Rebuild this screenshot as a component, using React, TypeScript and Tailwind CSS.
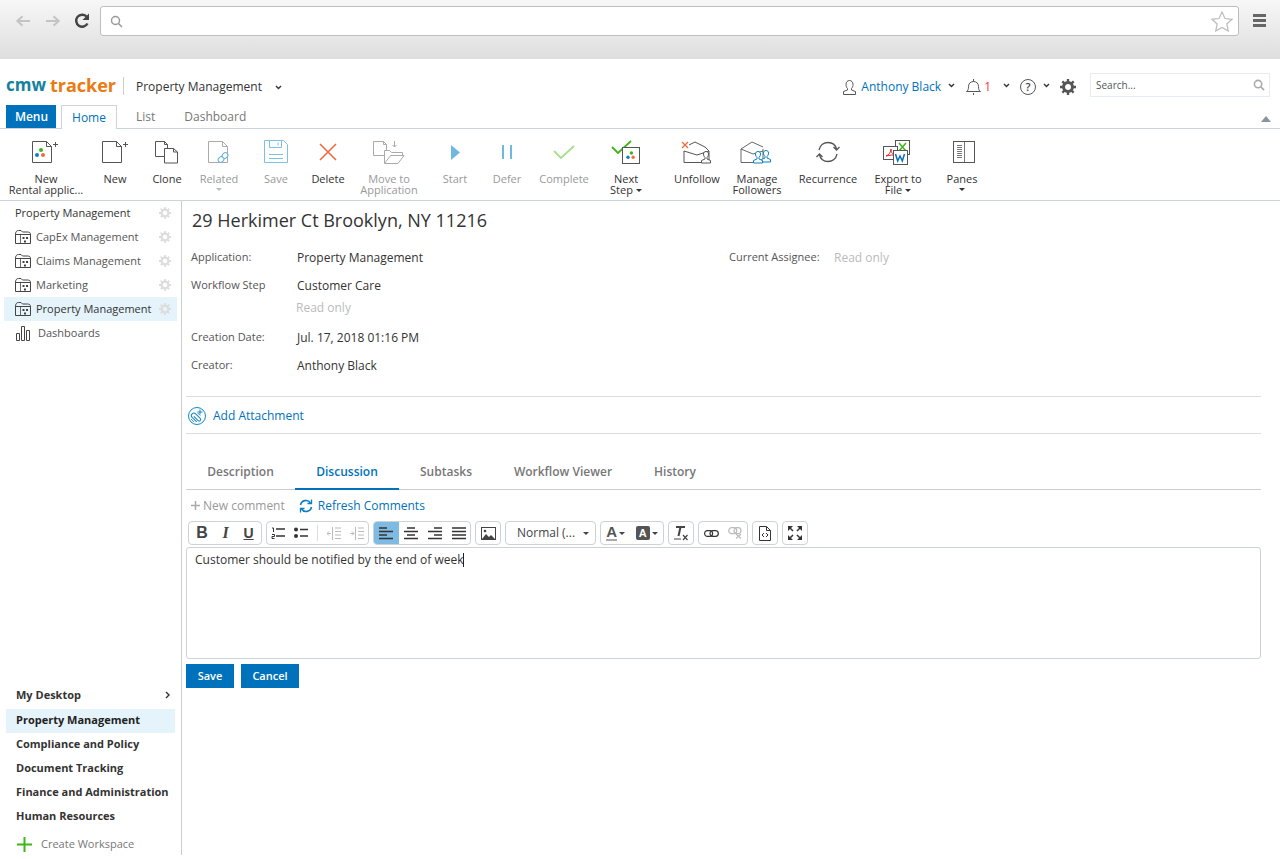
import React from "react";

const font = { fontFamily: '"Open Sans", sans-serif' };

const Caret = ({ c = "#444", cls = "" }: { c?: string; cls?: string }) => (
  <svg width="6" height="3" viewBox="0 0 6 3" className={`inline-block ${cls}`}><path d="M0 0h6L3 3z" fill={c} /></svg>
);
const Chev = ({ cls = "" }: { cls?: string }) => (
  <svg width="7" height="5" viewBox="0 0 7 5" className={cls}><path d="M1 1l2.500 2.500L6 1" fill="none" stroke="#333" strokeWidth="1.400" /></svg>
);
const Dots = ({ x = 0, y = 0, s = 1 }: { x?: number; y?: number; s?: number }) => (
  <g transform={`translate(${x} ${y}) scale(${s})`}>
    <circle cx="4" cy="0" r="2" fill="#3fb618" />
    <circle cx="0" cy="5" r="2" fill="#0b7fc4" />
    <circle cx="6" cy="5" r="2" fill="#f26a3a" />
  </g>
);
const Doc = ({ c = "#555" }: { c?: string }) => (
  <path d="M.5.500h14l5 5v16H.5zM14.500.5v5h5" fill="#fff" stroke={c} />
);
const Plus = ({ x, y }: { x: number; y: number }) => (
  <path d={`M${x} ${y + 2.5}h5M${x + 2.5} ${y}v5`} stroke="#555" strokeWidth="1" />
);

const IconNewApp = () => (
  <svg width="28" height="24" viewBox="0 0 28 24" className="-ml-[3px]"><g transform="translate(1 1)"><Doc /><Dots x={5} y={9} /></g><Plus x={22} y={2} /></svg>
);
const IconNew = () => (
  <svg width="28" height="24" viewBox="0 0 28 24"><g transform="translate(1 1)"><Doc /></g><Plus x={22} y={2} /></svg>
);
const IconClone = () => (
  <svg width="24" height="24" viewBox="0 0 24 24" className="-ml-[1px]">
    <path d="M.5 1.500h9l3 3v12H.5zM9.500 1.500v3h3" fill="#fff" stroke="#555" />
    <path d="M9.500 8.500h9l4 3.500v11h-13zM18.500 8.500v3.500h4" fill="#fff" stroke="#555" />
  </svg>
);
const IconRelated = () => (
  <svg width="24" height="24" viewBox="0 0 24 24">
    <g transform="translate(1 1)"><Doc c="#aaa" /></g>
    <g fill="#fff" stroke="#5fb0dd" strokeWidth="1">
      <rect x="11" y="17" width="6" height="5" rx="2.500" transform="rotate(-45 14 19.500)" />
      <rect x="15" y="13" width="6" height="5" rx="2.500" transform="rotate(-45 18 15.500)" />
    </g>
  </svg>
);
const IconSave = () => (
  <svg width="24" height="24" viewBox="0 0 24 24" fill="none" stroke="#7cc0e2">
    <path d="M.5.500h19l4 4v18H.5zM5.500.5v7h12v-7M14 2.500v3M5 14.500h14M5 18.500h14" />
  </svg>
);
const IconDelete = () => (
  <svg width="20" height="20" viewBox="0 0 20 20"><path d="M2 2l16 16M18 2L2 18" stroke="#f26a3a" strokeWidth="1.600" /></svg>
);
const IconMove = () => (
  <svg width="32" height="24" viewBox="0 0 32 24" fill="#fff" stroke="#aaa">
    <path d="M.5 1.500h10l3 3v11H.5zM10.500 1.500v3h3" />
    <path d="M11.500 23.500v-13h5l2 2h11v3M11.500 23.500l6-8h13.500l-6 8zM21.500 1v6M19.500 5l2 2 2-2" />
  </svg>
);
const IconStart = () => (
  <svg width="9" height="15" viewBox="0 0 9 15"><path d="M0 0l9 7.500L0 15z" fill="#70b8e0" /></svg>
);
const IconDefer = () => (
  <svg width="10" height="14" viewBox="0 0 10 14"><path d="M1 0v14M9 0v14" stroke="#70b8e0" strokeWidth="2" /></svg>
);
const IconCheck = () => (
  <svg width="22" height="15" viewBox="0 0 22 15"><path d="M1 6l7 7L21 1" fill="none" stroke="#a8e08c" strokeWidth="1.800" /></svg>
);
const IconNext = () => (
  <svg width="30" height="24" viewBox="0 0 30 24">
    <path d="M1 7l6 6L20 1" fill="none" stroke="#3fb618" strokeWidth="1.800" />
    <rect x="11.500" y="7.500" width="17" height="16" fill="#fff" stroke="#555" />
    <Dots x={17} y={13} s={0.85} />
  </svg>
);
const Person = ({ x, y, c }: { x: number; y: number; c: string }) => (
  <path transform={`translate(${x} ${y})`} d="M4 6.500c-1-1-1.500-2-1.500-3.500C2.500 1.500 3.500.5 5 .5s2.500 1 2.500 2.500c0 1.500-.5 2.500-1.500 3.500v1.500l3.500 1.500v2.500H.5V9.500L4 8z" fill="#fff" stroke={c} />
);
const IconUnfollow = () => (
  <svg width="32" height="24" viewBox="0 0 32 24">
    <path d="M3 11v11.500h25V11L24 7 14 2l-6 3" fill="none" stroke="#555" />
    <path d="M3 11l13 4 12-4" fill="none" stroke="#555" />
    <path d="M1 2l6 6M7 2L1 8" stroke="#f26a3a" strokeWidth="1.300" />
    <Person x={20} y={11} c="#555" />
  </svg>
);
const IconManage = () => (
  <svg width="34" height="24" viewBox="0 0 34 24">
    <path d="M1 9v13.500h22V9M1 9l11-7 11 5M1 9l12 5 10-3" fill="none" stroke="#555" strokeWidth="0.900" />
    <Person x={21} y={10} c="#0b7fc4" />
    <Person x={13} y={11} c="#0b7fc4" />
  </svg>
);
const IconRecurrence = () => (
  <svg width="24" height="22" viewBox="0 0 24 22" fill="none" stroke="#555" strokeWidth="1.300">
    <path d="M3 9C4 4 8 1.500 12 1.500c4 0 7.500 2.500 8.500 6.500" />
    <path d="M21 13c-1 5-5 7.500-9 7.500S4.500 18 3.500 14" />
    <path d="M17.500 6l3 3 3-3M.500 16l3-3 3 3" />
  </svg>
);
const IconExport = () => (
  <svg width="28" height="25" viewBox="0 0 28 25" className="-ml-[3px]">
    <rect x="12.500" y=".5" width="14" height="14" fill="#fff" stroke="#555" />
    <path d="M16 3l7 8M23 3l-7 8" stroke="#3fb618" strokeWidth="1.500" />
    <rect x=".5" y="6.500" width="14" height="13" fill="#fff" stroke="#555" />
    <path d="M3 16c3-1 5-4 5-7 0 4 2 6 5 6-3 0-6 0-10 1z" fill="none" stroke="#e02020" />
    <rect x="10.500" y="10.500" width="14" height="14" fill="#fff" stroke="#555" />
    <path d="M12.500 14l2.200 7 2.300-5 2.300 5 2.200-7" fill="none" stroke="#0b6fb8" strokeWidth="1.500" />
  </svg>
);
const IconPanes = () => (
  <svg width="22" height="22" viewBox="0 0 22 22" fill="none" stroke="#555" className="ml-[3px]">
    <rect x=".5" y=".5" width="21" height="21" />
    <path d="M11.500 0v22M4 4.500h5M4 6.500h5M4 8.500h5M4 10.500h5M4 12.500h5M4 14.500h5M4 16.500h5" strokeWidth="0.800" />
  </svg>
);

type TB = { w: number; ml?: number; icon: React.ReactNode; l1: string; l2?: string; caret?: "inline" | "below"; dim?: boolean };
const tools: TB[] = [
  { w: 80, icon: <IconNewApp />, l1: "New", l2: "Rental applic..." },
  { w: 58, icon: <IconNew />, l1: "New" },
  { w: 46, icon: <IconClone />, l1: "Clone" },
  { w: 58, icon: <IconRelated />, l1: "Related", caret: "below", dim: true },
  { w: 56, icon: <IconSave />, l1: "Save", dim: true },
  { w: 48, icon: <IconDelete />, l1: "Delete" },
  { w: 74, icon: <IconMove />, l1: "Move to", l2: "Application", dim: true },
  { w: 58, icon: <IconStart />, l1: "Start", dim: true },
  { w: 46, icon: <IconDefer />, l1: "Defer", dim: true },
  { w: 68, icon: <IconCheck />, l1: "Complete", dim: true },
  { w: 56, icon: <IconNext />, l1: "Next", l2: "Step", caret: "inline" },
  { w: 54, ml: 16, icon: <IconUnfollow />, l1: "Unfollow" },
  { w: 66, icon: <IconManage />, l1: "Manage", l2: "Followers" },
  { w: 76, icon: <IconRecurrence />, l1: "Recurrence" },
  { w: 64, icon: <IconExport />, l1: "Export to", l2: "File", caret: "inline" },
  { w: 64, icon: <IconPanes />, l1: "Panes", caret: "below" },
];

const Workspace = () => (
  <svg width="16" height="14" viewBox="0 0 16 14" fill="none" stroke="#444" className="shrink-0">
    <path d="M.5 4.500V13.500h15v-9M.5 4.500C.5 2 1.500.5 3.500.5h2.500l1.500 1.500H12.500c2 0 3 1 3 2.500zM.5 4.500h15" />
    <path d="M5.500 4.500v9" strokeWidth="0.800" />
    <path d="M7.500 7h2v2h-2zM11 7h2v2h-2zM9 10.500h2v2H9z" fill="#444" stroke="none" />
  </svg>
);
const Cog = ({ s = 12, c = "#ddd" }: { s?: number; c?: string }) => (
  <svg width={s} height={s} viewBox="0 0 16 16" className="shrink-0">
    <circle cx="8" cy="8" r="4.500" fill="none" stroke={c} strokeWidth="3" />
    <path d="M8 0v16M0 8h16M2.300 2.300l11.400 11.400M13.700 2.300L2.300 13.700" stroke={c} strokeWidth="2.400" strokeDasharray="3 10 3" />
  </svg>
);

const Group = ({ w, children, cls = "" }: { w: number; children: React.ReactNode; cls?: string }) => (
  <div style={{ width: w }} className={`h-[24px] border border-[#ccd2d6] rounded-[4px] flex items-center justify-around overflow-hidden ${cls}`}>{children}</div>
);
const Lines = ({ kind }: { kind: "l" | "c" | "r" | "j" }) => {
  const d = {
    l: "M0 1h8M0 4.500h14M0 8h8M0 11.500h14",
    c: "M3 1h8M0 4.500h14M3 8h8M0 11.500h14",
    r: "M6 1h8M0 4.500h14M6 8h8M0 11.500h14",
    j: "M0 1h14M0 4.500h14M0 8h14M0 11.500h14",
  }[kind];
  return <svg width="14" height="13" viewBox="0 0 14 13" className="-ml-[1px]"><path d={d} stroke="#333" strokeWidth="1.600" /></svg>;
};

const Field = ({ label, value, h, cls = "" }: { label: string; value: string; h: number; cls?: string }) => (
  <div className={`flex items-center ${cls}`} style={{ height: h }}>
    <div className="w-[106px] text-[#555] pb-[2px]">{label}</div>
    <div className="text-[12px] text-[#333]">{value}</div>
  </div>
);

export default function App() {
  return (
    <div style={font} className="w-[1280px] h-[859px] bg-white overflow-hidden text-[11px] text-[#333]">
      {/* browser chrome */}
      <div className="h-[59px] bg-gradient-to-b from-[#f7f7f7] to-[#dedede] flex items-start pt-[6px]">
        <div className="w-[100px] h-[30px] flex items-center pl-[15px] gap-[12px]">
          <svg width="16" height="14" viewBox="0 0 17 14" fill="none" stroke="#c4c4c4" strokeWidth="2.200"><path d="M16 7H3M8 2L2.500 7 8 12" /></svg>
          <svg width="16" height="14" viewBox="0 0 17 14" fill="none" stroke="#c4c4c4" strokeWidth="2.200" className="ml-[2px]"><path d="M1 7h13M9 2l5.500 5L9 12" /></svg>
          <svg width="16" height="16" viewBox="0 0 16 16" fill="none" className="ml-[1px]"><path d="M13.500 10.500A6 6 0 1 1 12.500 3.500" stroke="#444" strokeWidth="2.400" /><path d="M15 .5v6.500H8.500z" fill="#444" /></svg>
        </div>
        <div className="w-[1139px] h-[30px] bg-white border border-[#bdbdbd] rounded-[3px] flex items-center justify-between pl-[9px] pr-[5px]">
          <svg width="13" height="13" viewBox="0 0 13 13" fill="none" stroke="#999" strokeWidth="1.500"><circle cx="5.500" cy="5.500" r="4" /><path d="M8.500 8.500l3.500 3.500" /></svg>
          <svg width="22" height="21" viewBox="0 0 22 21" fill="#fff" stroke="#bbb" strokeWidth="1.200"><path d="M11 1l3 6.500 7 .8-5.200 4.700 1.500 7L11 16.500 4.700 20l1.500-7L1 8.300l7-.8z" /></svg>
        </div>
        <div className="flex-1 flex flex-col gap-[2px] items-center pt-[8px]">
          <div className="w-[13px] h-[3px] bg-[#666]" /><div className="w-[13px] h-[3px] bg-[#666]" /><div className="w-[13px] h-[3px] bg-[#666]" />
        </div>
      </div>

      {/* header */}
      <div className="h-[46px] flex items-center pl-[6px] pr-[10px] pt-[5px]">
        <div className="flex items-center justify-between font-bold leading-none w-[110px] whitespace-nowrap">
          <span className="text-[#14829e] text-[17px]">cmw</span><span className="text-[#ea7a12] text-[18px]">tracker</span>
        </div>
        <div className="w-px h-[18px] bg-[#ccc] ml-[7px] mr-[12px] mt-[2px]" />
        <span className="text-[12px] text-[#333] pt-[5px]">Property Management</span>
        <Chev cls="ml-[13px] mt-[5px]" />
        <div className="flex-1" />
        <div className="flex items-center pt-[5px]">
          <svg width="13" height="15" viewBox="0 0 13 15" fill="none" stroke="#555"><path d="M4.500 8.500C3.500 7.500 3 6 3 4.500 3 2 4.500.5 6.500.5S10 2 10 4.500C10 6 9.500 7.500 8.500 8.500v1.500l4 1.500v3H.5v-3l4-1.500z" /></svg>
          <span className="text-[12px] text-[#0072bc] ml-[5px]">Anthony Black</span>
          <Chev cls="ml-[7px] -mt-[3px]" />
          <svg width="15" height="16" viewBox="0 0 15 16" fill="none" stroke="#555" className="ml-[11px]"><path d="M.5 12.500c1.500-1 2-2 2-5s2-5 5-5 5 2 5 5 .5 4 2 5zM7.500 0v2.500M7.500 14v2" /></svg>
          <span className="text-[12px] text-[#f33] ml-[3px]">1</span>
          <Chev cls="ml-[12px] -mt-[3px]" />
          <div className="ml-[10px] w-[16px] h-[16px] rounded-full border border-[#555] text-[11px] leading-[14px] text-center text-[#444] font-semibold">?</div>
          <Chev cls="ml-[7px] -mt-[3px]" />
          <span className="ml-[10px]"><Cog s={16} c="#555" /></span>
        </div>
        <div className="ml-[14px] w-[180px] h-[24px] border border-[#e6ecf6] flex items-center justify-between pl-[5px] pr-[4px] text-[10px] text-[#555] mt-[1px]">
          <span>Search...</span>
          <svg width="12" height="12" viewBox="0 0 13 13" fill="none" stroke="#aaa" strokeWidth="1.700"><circle cx="5.500" cy="5.500" r="4" /><path d="M8.500 8.500l3.500 3.500" /></svg>
        </div>
      </div>

      {/* tabs row */}
      <div className="h-[24px] border-b border-[#ccd4d8] flex items-end pl-[6px] pr-[9px]">
        <div className="w-[50px] h-[23px] bg-[#0072bc] text-white text-[12px] font-semibold flex items-center justify-center pl-[1px]">Menu</div>
        <div className="ml-[5px] w-[56px] h-[24px] border border-b-0 border-[#ccd4d8] bg-white text-[12px] text-[#0072bc] flex items-center justify-center -mb-px">Home</div>
        <span className="ml-[19px] text-[12px] text-[#777] leading-[23px]">List</span>
        <span className="ml-[29px] text-[12px] text-[#777] leading-[23px]">Dashboard</span>
        <div className="flex-1" />
        <svg width="10" height="6" viewBox="0 0 10 6" className="mb-[6px]"><path d="M0 6l5-6 5 6z" fill="#8a949a" /></svg>
      </div>

      {/* toolbar */}
      <div className="h-[72px] border-b border-[#ccd4d8] flex pl-[6px]">
        {tools.map((t) => (
          <div key={t.l1 + (t.l2 ?? "")} style={{ width: t.w, marginLeft: t.ml ?? 0 }} className={`shrink-0 flex flex-col items-center ${t.dim ? "text-[#999]" : "text-[#333]"}`}>
            <div className="h-[38px] w-full flex items-center justify-center pt-[8px]">{t.icon}</div>
            <div className="mt-[6px] text-[11px] leading-[11px] text-center whitespace-nowrap">{t.l1}</div>
            {t.l2 && (
              <div className="text-[11px] leading-[11px] text-center whitespace-nowrap">
                {t.l2}{t.caret === "inline" && <Caret cls="ml-[3px] mb-[1px]" c="#333" />}
              </div>
            )}
            {t.caret === "below" && <Caret cls="mt-[4px]" c={t.dim ? "#bbb" : "#333"} />}
          </div>
        ))}
      </div>

      {/* body */}
      <div className="h-[654px] flex">
        <aside className="w-[182px] shrink-0 border-r border-[#ccc] flex flex-col justify-between">
          <div className="pl-[4px] pr-[4px]">
            <div className="h-[24px] flex items-center pl-[11px] pr-[6px] justify-between"><span>Property Management</span><Cog /></div>
            {["CapEx Management", "Claims Management", "Marketing", "Property Management"].map((n, i) => (
              <div key={n} className={`h-[24px] flex items-center pl-[11px] pr-[6px] ${i === 3 ? "bg-[#e5f3fb] text-[#333]" : "text-[#555]"}`}>
                <Workspace /><span className="ml-[5px] flex-1 whitespace-nowrap">{n}</span><Cog />
              </div>
            ))}
            <div className="h-[24px] flex items-center pl-[12px] text-[#555]">
              <svg width="15" height="15" viewBox="0 0 15 15" fill="none" stroke="#444"><path d="M.5 14.500v-7h3v7zM5.500 14.500V.5h3v14zM10.500 14.500v-10h3v10z" /></svg>
              <span className="ml-[7px]">Dashboards</span>
            </div>
          </div>
          <div className="pl-[6px] pr-[6px] font-bold text-[#333]">
            <div className="h-[25px] flex items-center justify-between pl-[10px] pr-[5px] pb-[3px]">
              <span>My Desktop</span>
              <svg width="5" height="8" viewBox="0 0 5 8"><path d="M1 1l3 3-3 3" fill="none" stroke="#333" strokeWidth="1.400" /></svg>
            </div>
            {["Property Management", "Compliance and Policy", "Document Tracking", "Finance and Administration", "Human Resources"].map((n, i) => (
              <div key={n} className={`h-[24px] flex items-center pl-[10px] pb-[1px] whitespace-nowrap ${i === 0 ? "bg-[#e5f3fb] text-[#222]" : ""}`}>{n}</div>
            ))}
            <div className="h-[26px] flex items-center pl-[11px] pt-[4px] font-normal text-[#777]">
              <svg width="15" height="15" viewBox="0 0 15 15"><path d="M0 7.500h15M7.500 0v15" stroke="#3fb618" strokeWidth="2" /></svg>
              <span className="ml-[9px]">Create Workspace</span>
            </div>
          </div>
        </aside>

        <main className="w-[1075px] ml-[4px]">
          <div className="h-[40px] pt-[6px] pl-[6px] text-[18px] leading-[26px] text-[#333]">29 Herkimer Ct Brooklyn, NY 11216</div>
          <div className="pl-[5px] flex mt-[3px]">
            <div className="w-[538px]">
              <Field label="Application:" value="Property Management" h={28} />
              <Field label="Workflow Step" value="Customer Care" h={28} />
              <div className="h-[17px] pl-[105px] text-[12px] text-[#bbb] leading-[16px]">Read only</div>
              <Field label="Creation Date:" value="Jul. 17, 2018 01:16 PM" h={28} cls="mt-[7px]" />
              <Field label="Creator:" value="Anthony Black" h={28} />
            </div>
            <div className="h-[28px] flex items-center">
              <span className="w-[105px] text-[#555] pb-[2px]">Current Assignee:</span>
              <span className="text-[12px] text-[#bbb]">Read only</span>
            </div>
          </div>

          <div className="mt-[16px] h-[38px] border-y border-[#ddd] flex items-center pl-[2px] pt-[1px] text-[12px] text-[#0072bc]">
            <svg width="18" height="18" viewBox="0 0 18 18" fill="none" stroke="#1487c4">
              <circle cx="9" cy="9" r="8.500" />
              <g transform="rotate(-45 8 10)">
                <path d="M5 14V7.500a2.500 2.500 0 0 1 5 0V14a1.500 1.500 0 0 1-3 0V8" />
                <path d="M3 12V8M12 12V8" strokeWidth="0.800" />
              </g>
              <path d="M12 2.500v5M9.500 5h5" />
            </svg>
            <span className="ml-[7px]">Add Attachment</span>
          </div>

          <div className="mt-[21px] h-[35px] border-b border-[#ccc] flex text-[12px] font-semibold text-[#777]">
            {[["Description", 109], ["Discussion", 104], ["Subtasks", 94], ["Workflow Viewer", 140], ["History", 84]].map(([n, w]) => (
              <div key={n as string} style={{ width: w as number }} className={`h-[35px] flex items-center justify-center border-b-2 ${n === "Discussion" ? "text-[#0072bc] border-[#0072bc]" : "border-transparent"}`}>{n}</div>
            ))}
          </div>

          <div className="h-[31px] flex items-center pl-[5px] text-[12px]">
            <svg width="9" height="9" viewBox="0 0 9 9"><path d="M0 4.500h9M4.500 0v9" stroke="#aaa" strokeWidth="1.500" /></svg>
            <span className="ml-[3px] text-[#999]">New comment</span>
            <svg width="14" height="14" viewBox="0 0 14 14" fill="none" stroke="#0b7fc4" strokeWidth="1.600" className="ml-[14px]"><path d="M1.500 6A5.500 5.500 0 0 1 11.500 4M12.500 8A5.500 5.500 0 0 1 2.500 10" /><path d="M12.500 .5v4h-4M1.500 13.500v-4h4" strokeWidth="1.300" /></svg>
            <span className="ml-[5px] text-[#0072bc]">Refresh Comments</span>
          </div>

          {/* editor toolbar */}
          <div className="flex gap-[4px] pl-[2px]">
            <Group w={74}>
              <span className="text-[16px] font-bold text-[#444]" style={{ fontFamily: '"Liberation Sans", sans-serif' }}>B</span>
              <span className="text-[16px] font-bold italic text-[#444]" style={{ fontFamily: '"Liberation Serif", serif' }}>I</span>
              <span className="text-[14px] font-bold underline text-[#444]" style={{ fontFamily: '"Liberation Sans", sans-serif' }}>U</span>
            </Group>
            <Group w={103}>
              <svg width="14" height="12" viewBox="0 0 14 12"><path d="M5 2h9M5 9h9" stroke="#333" strokeWidth="1.500" /><path d="M1 1h1.500v4M1 7.500h2.500v2H1v2h2.500" fill="none" stroke="#333" /></svg>
              <svg width="14" height="12" viewBox="0 0 14 12"><circle cx="2" cy="2.500" r="2" fill="#333" /><circle cx="2" cy="9" r="2" fill="#333" /><path d="M6 2.500h8M6 9h8" stroke="#333" strokeWidth="1.500" /></svg>
              <div className="w-px h-[16px] bg-[#ddd]" />
              <svg width="14" height="13" viewBox="0 0 14 13"><path d="M8 1h6M8 4.500h6M8 8h6M8 11.500h6M5.500 0v13M4 6.500H0M2 4.500l-2 2 2 2" fill="none" stroke="#bbb" /></svg>
              <svg width="14" height="13" viewBox="0 0 14 13"><path d="M8 1h6M8 4.500h6M8 8h6M8 11.500h6M5.500 0v13M0 6.500h4M2 4.500l2 2-2 2" fill="none" stroke="#bbb" /></svg>
            </Group>
            <Group w={98} cls="!justify-start">
              <div className="w-[25px] h-full bg-[#7fbae2] flex items-center justify-center shrink-0"><Lines kind="l" /></div>
              <div className="w-[24px] flex justify-center shrink-0"><Lines kind="c" /></div>
              <div className="w-[24px] flex justify-center shrink-0"><Lines kind="r" /></div>
              <div className="w-[24px] flex justify-center shrink-0"><Lines kind="j" /></div>
            </Group>
            <Group w={26}>
              <svg width="15" height="13" viewBox="0 0 15 13"><rect x=".5" y=".5" width="14" height="12" fill="#fff" stroke="#444" /><path d="M1 12l4-5 3 3 2-2 4 4z" fill="#444" /><circle cx="4" cy="4" r="1.300" fill="#444" /></svg>
            </Group>
            <Group w={91} cls="!justify-start pl-[11px]">
              <span className="text-[12px] text-[#444] whitespace-nowrap">Normal (...</span>
              <Caret cls="ml-[8px]" />
            </Group>
            <Group w={64}>
              <span className="flex items-center">
                <span className="text-[15px] font-bold text-[#555] leading-[14px] border-b-2 border-[#aaa]" style={{ fontFamily: '"Liberation Sans", sans-serif' }}>A</span><Caret cls="ml-[2px]" />
              </span>
              <span className="flex items-center">
                <span className="w-[14px] h-[14px] bg-[#555] rounded-[2px] text-white text-[11px] font-bold leading-[14px] text-center" style={{ fontFamily: '"Liberation Sans", sans-serif' }}>A</span><Caret cls="ml-[2px]" />
              </span>
            </Group>
            <Group w={26}>
              <svg width="15" height="16" viewBox="0 0 15 16"><path d="M2 2h9M6.500 2L4.500 11" fill="none" stroke="#444" strokeWidth="2" /><path d="M0 14h7" stroke="#444" /><path d="M9 10l4.500 5M13.500 10L9 15" stroke="#444" strokeWidth="1.200" /></svg>
            </Group>
            <Group w={50}>
              <svg width="15" height="7" viewBox="0 0 15 7" fill="none" stroke="#333" strokeWidth="1.200"><rect x=".6" y=".6" width="8" height="5.800" rx="2.900" /><rect x="6" y=".6" width="8.300" height="5.800" rx="2.900" /></svg>
              <svg width="15" height="12" viewBox="0 0 15 12" fill="none" stroke="#bbb" strokeWidth="1.200"><rect x=".7" y=".7" width="8" height="6" rx="3" /><rect x="6" y=".7" width="7" height="6" rx="3" /><path d="M8 7l5 4.500M13 7l-5 4.500" /></svg>
            </Group>
            <Group w={26}>
              <svg width="12" height="15" viewBox="0 0 12 15" fill="none" stroke="#333"><path d="M.5.500h7l4 4v10H.5zM7.500.5v4h4" /><path d="M5 7L3 9l2 2M7 7l2 2-2 2" /></svg>
            </Group>
            <Group w={26}>
              <svg width="14" height="14" viewBox="0 0 14 14" fill="none" stroke="#333" strokeWidth="1.500"><path d="M1 1l4 4M13 1L9 5M1 13l4-4M13 13L9 9" /><path d="M0 0h5L0 5zM14 0H9l5 5zM0 14h5L0 9zM14 14H9l5-5z" fill="#333" stroke="none" /></svg>
            </Group>
          </div>

          <div className="mt-[2px] h-[112px] border border-[#ccd2d6] rounded-[3px] pl-[8px] pt-[3px] text-[12px] leading-[17px] text-[#333] flex items-start">
            <span>Customer should be notified by the end of week</span><span className="w-px h-[14px] bg-[#222] mt-[2px]" />
          </div>

          <div className="mt-[5px] flex gap-[7px]">
            <div className="w-[48px] h-[24px] bg-[#0072bc] text-white font-semibold flex items-center justify-center">Save</div>
            <div className="w-[58px] h-[24px] bg-[#0072bc] text-white font-semibold flex items-center justify-center">Cancel</div>
          </div>
        </main>
      </div>
    </div>
  );
}
